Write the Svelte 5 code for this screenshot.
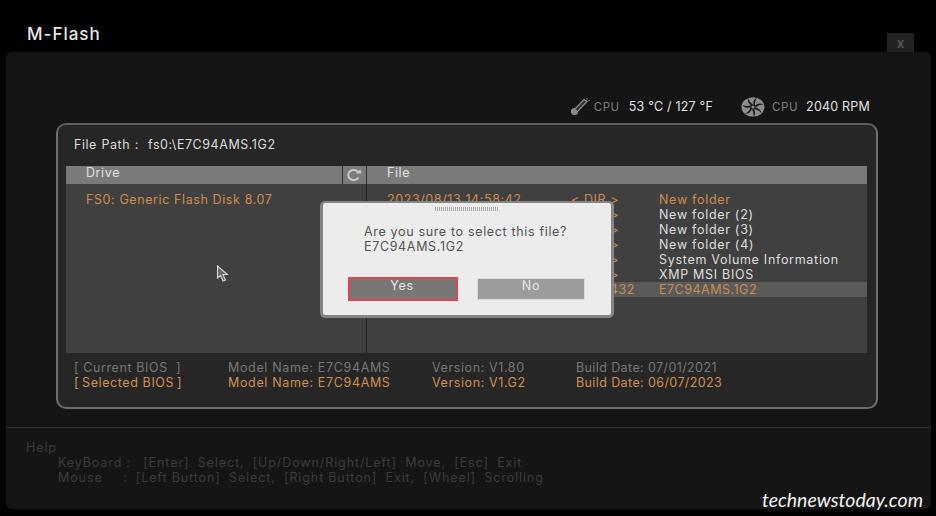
<script>
  const files = [
    { date: '2023/08/13 14:58:42', size: '< DIR >', name: 'New folder', on: true },
    { date: '2023/08/13 14:59:10', size: '< DIR >', name: 'New folder (2)' },
    { date: '2023/08/13 14:59:16', size: '< DIR >', name: 'New folder (3)' },
    { date: '2023/08/13 14:59:21', size: '< DIR >', name: 'New folder (4)' },
    { date: '2023/08/13 14:57:03', size: '< DIR >', name: 'System Volume Information' },
    { date: '2023/08/13 14:56:48', size: '< DIR >', name: 'XMP MSI BIOS' },
    { date: '2023/06/07 10:12:30', size: '16777432', name: 'E7C94AMS.1G2', on: true, sel: true },
  ];
  const bladeAngles = [0, 51, 103, 154, 206, 257, 309];
</script>

<div class="screen">
  <header class="top">
    <h1>M-Flash</h1>
    <button class="close">x</button>
  </header>

  <main class="panel">
    <div class="stats">
      <svg class="thermo" width="21" height="18" viewBox="0 0 21 18">
        <circle cx="4.5" cy="13.5" r="3.6" fill="#8a8a8a" />
        <path d="M5 11 L14 1.5 L17 3.5 L8 13" fill="#333" stroke="#8a8a8a" stroke-width="1.2" />
        <path d="M16 1 l2 -0.5 M18 3 l2 -0.5" stroke="#777" stroke-width="0.8" />
      </svg>
      <span class="lbl">CPU</span>
      <span class="val">53 °C / 127 °F</span>
      <svg class="fan" width="24" height="20" viewBox="-12 -10 24 20">
        <ellipse rx="11.5" ry="9.8" fill="#8d8d8d" />
        {#each bladeAngles as a}
          <path d="M2 -1.5 Q6 -5 10.5 -2.5 Q6.5 -3 2.8 0.2 Z" fill="#1b1b1b" transform="rotate({a})" />
        {/each}
        <circle r="2.8" fill="#1b1b1b" />
        <circle r="1.6" fill="#8d8d8d" />
      </svg>
      <span class="lbl">CPU</span>
      <span class="val">2040 RPM</span>
    </div>

    <section class="box">
      <div class="path">File Path :&nbsp; fs0:\E7C94AMS.1G2</div>

      <div class="table">
        <div class="head">
          <div class="h-drive">Drive</div>
          <div class="h-refresh">
            <svg width="16" height="14" viewBox="0 0 16 14">
              <path d="M12.5 4.5 A5.5 5 0 1 0 12.5 9.5" fill="none" stroke="#c9c9c9" stroke-width="2" />
              <path d="M9.5 5.5 L15.5 5.5 L14.5 1.5 Z" fill="#c9c9c9" />
            </svg>
          </div>
          <div class="h-file">File</div>
        </div>
        <div class="body">
          <div class="drives">
            <div class="drive">FS0: Generic Flash Disk 8.07</div>
          </div>
          <div class="files">
            {#each files as f}
              <div class="row" class:on={f.on} class:sel={f.sel}>
                <span class="c-date">{f.date}</span>
                <span class="c-size">{f.size}</span>
                <span class="c-name">{f.name}</span>
              </div>
            {/each}
          </div>
        </div>
      </div>

      <div class="bios">
        <span class="b1">[ Current BIOS&nbsp; ]</span>
        <span class="b2">Model Name: E7C94AMS</span>
        <span class="b3">Version: V1.80</span>
        <span class="b4">Build Date: 07/01/2021</span>
      </div>
      <div class="bios on">
        <span class="b1">[&thinsp;Selected BIOS&thinsp;]</span>
        <span class="b2">Model Name: E7C94AMS</span>
        <span class="b3">Version: V1.G2</span>
        <span class="b4">Build Date: 06/07/2023</span>
      </div>
    </section>

    <footer class="help">
      <div class="help-title">Help</div>
      <div class="help-line">KeyBoard :&nbsp; &nbsp;[Enter]&nbsp; Select,&nbsp; [Up/Down/Right/Left]&nbsp; Move,&nbsp; [Esc]&nbsp; Exit</div>
      <div class="help-line">Mouse &nbsp; &nbsp; :&nbsp; [Left Button]&nbsp; Select,&nbsp; [Right Button]&nbsp; Exit,&nbsp; [Wheel]&nbsp; Scrolling</div>
    </footer>
  </main>

  <div class="dialog">
    <div class="grip"></div>
    <p>Are you sure to select this file?<br />E7C94AMS.1G2</p>
    <div class="actions">
      <button class="yes">Yes</button>
      <button class="no">No</button>
    </div>
  </div>

  <svg class="cursor" width="14" height="18" viewBox="0 0 14 18">
    <path d="M1.5 1 L1.5 13 L4.5 10.5 L7 16 L9.5 15 L7 9.5 L11.5 9.5 Z" fill="#6a6a6a" stroke="#d8d8d8" stroke-width="1.1" />
  </svg>

  <div class="mark">technewstoday.com</div>
</div>

<style>
  :global(body) {
    margin: 0;
    background: #000;
  }

  .screen {
    position: relative;
    width: 936px;
    height: 516px;
    overflow: hidden;
    background: #000;
    font-family: Inter, "Liberation Sans", sans-serif;
    font-size: 12.5px;
    letter-spacing: 0.6px;
    color: #d8d8d8;
  }

  .top {
    display: flex;
    justify-content: space-between;
    align-items: flex-end;
    height: 52px;
    padding: 0 22px 0 27px;
  }

  h1 {
    margin: 0 0 9px;
    font-size: 17px;
    font-weight: 500;
    line-height: 18px;
    letter-spacing: 1px;
    color: #e6e6e6;
  }

  .close {
    width: 27px;
    height: 19px;
    padding: 0;
    border: none;
    background: #222;
    color: #555;
    font: 700 13px Inter, sans-serif;
  }

  .panel {
    display: flex;
    flex-direction: column;
    width: 925px;
    height: 457px;
    margin-left: 6px;
    border-radius: 6px;
    background: #151515;
  }

  .stats {
    display: flex;
    align-items: center;
    justify-content: flex-end;
    height: 71px;
    box-sizing: border-box;
    padding: 39px 61px 0 0;
    line-height: 32px;
  }

  .lbl {
    margin-left: 3px;
    font-size: 11.5px;
    color: #7e7e7e;
  }

  .val {
    margin-left: 9px;
    letter-spacing: 0.2px;
    color: #e2e2e2;
  }

  .fan {
    margin-left: 28px;
  }

  .fan + .lbl {
    margin-left: 7px;
  }

  .fan + .lbl + .val {
    margin-left: 8px;
  }

  .box {
    box-sizing: border-box;
    width: 822px;
    height: 286px;
    margin-left: 50px;
    padding: 0 9px 0 8px;
    border: 2px solid #6e6e6e;
    border-top-color: #5f5f5f;
    border-radius: 10px;
    background: #262626;
  }

  .path {
    height: 41px;
    padding-left: 8px;
    line-height: 40px;
    letter-spacing: 0.55px;
    word-spacing: 0.5px;
    color: #dcdcdc;
  }

  .table {
    display: flex;
    flex-direction: column;
    height: 187px;
    margin-bottom: 7px;
  }

  .head {
    display: flex;
    flex: none;
    height: 18px;
    background: #7a7a7a;
    line-height: 14px;
    color: #e2e2e2;
  }

  .h-drive {
    box-sizing: border-box;
    width: 276px;
    padding-left: 20px;
  }

  .h-refresh {
    display: flex;
    align-items: center;
    justify-content: center;
    box-sizing: border-box;
    width: 25px;
    padding-right: 2px;
    border-left: 1px solid #333;
    border-right: 1px solid #333;
  }

  .h-file {
    padding-left: 20px;
  }

  .body {
    display: flex;
    flex: 1;
    background: #404040;
  }

  .drives {
    box-sizing: border-box;
    width: 301px;
    padding: 8px 0 0 20px;
    border-right: 1px solid #222;
  }

  .drive {
    line-height: 15px;
    color: #cd8d4c;
  }

  .files {
    flex: 1;
    padding-top: 8px;
  }

  .row {
    display: flex;
    height: 15px;
    padding-left: 20px;
    line-height: 15px;
    color: #dedede;
  }

  .row.on {
    color: #cd8d4c;
  }

  .row.sel {
    background: #5a5a5a;
  }

  .c-date {
    width: 184px;
    color: #cd8d4c;
  }

  .c-size {
    box-sizing: border-box;
    width: 88px;
    color: #cd8d4c;
  }

  .sel .c-size {
    padding-left: 2px;
  }

  .c-name {
    letter-spacing: 0.7px;
  }

  .sel .c-name {
    letter-spacing: 0.5px;
  }

  .bios {
    display: flex;
    height: 15px;
    padding-left: 8px;
    line-height: 15px;
    color: #777;
  }

  .bios.on {
    color: #d0904e;
  }

  .b1 {
    width: 154px;
  }

  .b2 {
    width: 204px;
    letter-spacing: 0.65px;
  }

  .b3 {
    width: 144px;
  }

  .b4 {
    letter-spacing: 0.4px;
  }

  .help {
    flex: 1;
    margin-top: 18px;
    padding: 12px 0 0 20px;
    border-top: 1px solid #333;
    color: #3c3c3c;
    line-height: 15px;
    letter-spacing: 0.9px;
    word-spacing: -0.3px;
  }

  .help-line {
    padding-left: 32px;
  }

  .dialog {
    position: absolute;
    left: 320px;
    top: 201px;
    box-sizing: border-box;
    width: 294px;
    height: 117px;
    border: 3px solid #858585;
    border-top-width: 2px;
    border-radius: 5px;
    background: #ececec;
    color: #555;
  }

  .grip {
    width: 64px;
    height: 4px;
    margin: 4px auto 0;
    background: repeating-linear-gradient(90deg, #aaa 0 1px, #eee 1px 2px);
  }

  .dialog p {
    margin: 13px 0 0 41px;
    line-height: 15px;
    letter-spacing: 0.66px;
  }

  .actions {
    display: flex;
    gap: 22px;
    margin: 25px 0 0 27px;
  }

  .actions button {
    width: 106px;
    height: 20px;
    padding: 0 0 7px;
    border: none;
    font: 12.5px/13px Inter, sans-serif;
    letter-spacing: 0.7px;
    color: #e6e6e6;
  }

  .yes {
    background: #777;
    outline: 2px solid #e2444a;
  }

  .actions .yes {
    padding-right: 2px;
  }

  .no {
    background: #9c9c9c;
    outline: 1px solid #dcdcdc;
  }

  .cursor {
    position: absolute;
    left: 216px;
    top: 265px;
  }

  .mark {
    position: absolute;
    right: 13px;
    top: 488px;
    font-family: Lato, Inter, sans-serif;
    font-size: 19.5px;
    font-style: italic;
    letter-spacing: 0;
    color: #f2f2f2;
  }
</style>
